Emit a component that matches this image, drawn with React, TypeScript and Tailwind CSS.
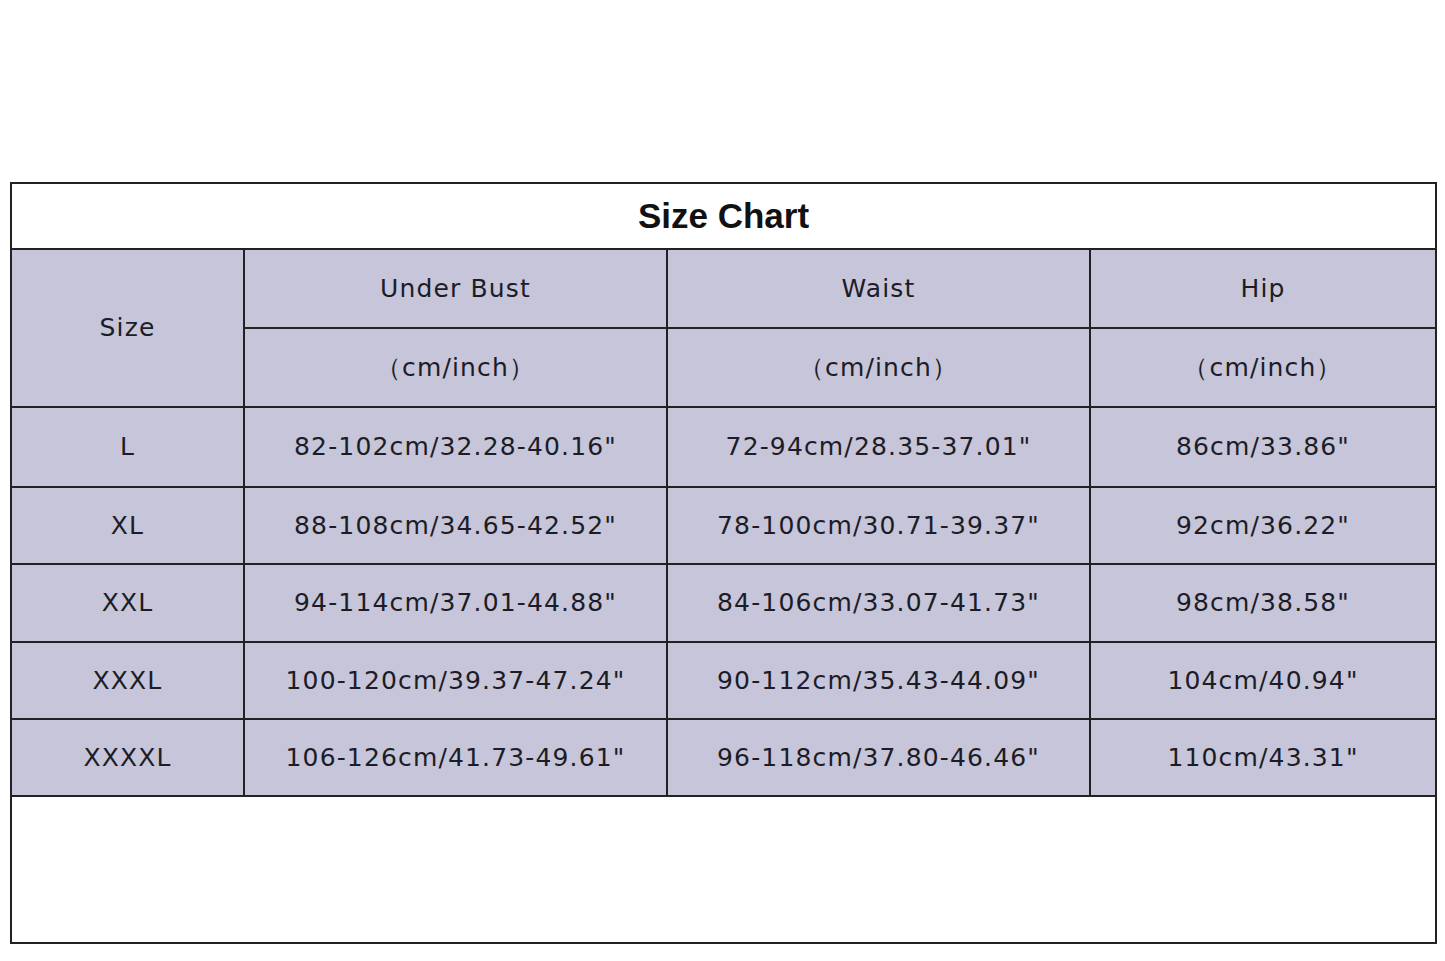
import React from "react";

const rows = [
  ["L", "82-102cm/32.28-40.16\"", "72-94cm/28.35-37.01\"", "86cm/33.86\""],
  ["XL", "88-108cm/34.65-42.52\"", "78-100cm/30.71-39.37\"", "92cm/36.22\""],
  ["XXL", "94-114cm/37.01-44.88\"", "84-106cm/33.07-41.73\"", "98cm/38.58\""],
  ["XXXL", "100-120cm/39.37-47.24\"", "90-112cm/35.43-44.09\"", "104cm/40.94\""],
  ["XXXXL", "106-126cm/41.73-49.61\"", "96-118cm/37.80-46.46\"", "110cm/43.31\""],
];

const cell = "bg-[#c6c5d9] flex items-center justify-center text-[#1c1c26]";

export default function App() {
  return (
    <div className="w-[1445px] h-[961px] bg-white pt-[182px] pl-[10px]" style={{ fontFamily: '"DejaVu Sans", Verdana, sans-serif' }}>
      <div className="w-[1427px] h-[762px] border-2 border-[#222] bg-white flex flex-col">
        <div className="h-[64px] flex items-center justify-center text-[35px] font-bold text-[#111]" style={{ fontFamily: '"Liberation Sans", Arial, sans-serif' }}>
          Size Chart
        </div>
        <div className="grid grid-cols-[231px_421px_421px_344px] grid-rows-[77px_77px_78px_75px_76px_75px_75px] gap-[2px] bg-[#222] py-[2px] text-[25px] tracking-[1.15px]">
          <div className={`${cell} row-span-2`}>Size</div>
          <div className={cell}>Under Bust</div>
          <div className={cell}>Waist</div>
          <div className={cell}>Hip</div>
          <div className={cell}>（cm/inch）</div>
          <div className={cell}>（cm/inch）</div>
          <div className={cell}>（cm/inch）</div>
          {rows.map((r) =>
            r.map((c, i) => (
              <div key={r[0] + i} className={cell}>
                {c}
              </div>
            ))
          )}
        </div>
        <div className="flex-1 bg-white" />
      </div>
    </div>
  );
}
